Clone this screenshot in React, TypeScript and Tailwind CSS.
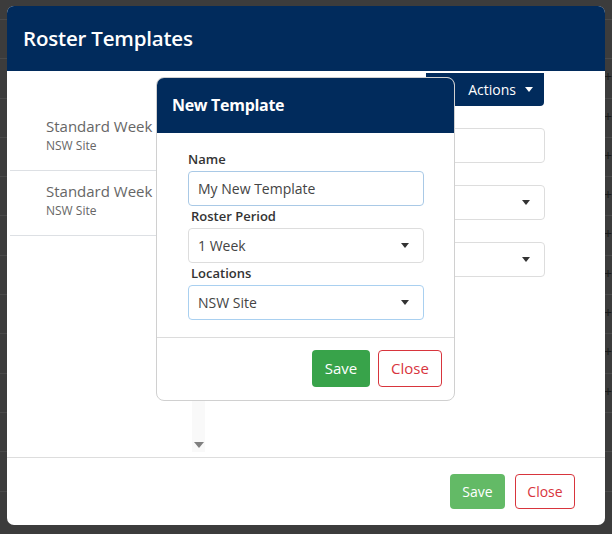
import React from 'react'

const font = { fontFamily: '"Open Sans", "Liberation Sans", sans-serif' }

function Caret({ className = 'border-t-[#333]' }: { className?: string }) {
  return (
    <span
      className={`inline-block w-0 h-0 border-l-[4px] border-r-[4px] border-t-[5px] border-l-transparent border-r-transparent ${className}`}
    />
  )
}

const templates = [
  { name: 'Standard Week', site: 'NSW Site' },
  { name: 'Standard Week 2', site: 'NSW Site' },
]

export default function App() {
  return (
    <div className="relative w-[612px] h-[534px] overflow-hidden bg-[#3c3c3c]" style={font}>
      {/* background table rows behind the dialog */}
      <div className="absolute inset-0 pt-[19px]">
        {Array.from({ length: 13 }).map((_, i) => (
          <div key={i} className="h-[39.3px] border-t border-[#4a4a4a] relative">
            {i > 0 && i < 10 && (
              <span className="absolute right-0 top-[11px] text-[14px] leading-none text-[#1a1a1a]">+</span>
            )}
          </div>
        ))}
      </div>

      {/* dialog */}
      <div className="absolute left-[7px] top-[6px] w-[598px] h-[519px] bg-white rounded-[7px] overflow-hidden flex flex-col">
        <div className="h-[65px] bg-[#012b5c] flex items-center px-[16px] shrink-0">
          <h2 className="text-white text-[20.5px] font-semibold tracking-[-0.2px]">Roster Templates</h2>
        </div>

        <div className="relative flex-1">
          <div className="flex justify-end pr-[61px] pt-[2px]">
            <button className="h-[33px] w-[118px] bg-[#012b5c] rounded-b-[4px] text-white text-[14px] flex items-center justify-end pr-[11px] gap-[9px]">
              Actions <Caret className="border-t-white" />
            </button>
          </div>

          <div className="flex">
            <div className="w-[440px] pl-[3px]">
              {templates.map((t) => (
                <div key={t.name} className="h-[65px] border-b border-[#dde0e4] pl-[36px] pt-[10px]">
                  <div className="text-[15px] text-[#666] leading-[20px]">{t.name}</div>
                  <div className="text-[12px] text-[#666] leading-[20px]">{t.site}</div>
                </div>
              ))}
            </div>
            <div className="flex-1 pr-[60px] pt-[22px] flex flex-col gap-[22px]">
              <div className="h-[35px] border border-[#ddd] rounded-[4px]" />
              <div className="h-[35px] border border-[#ddd] rounded-[4px] flex items-center justify-end pr-[14px]">
                <Caret />
              </div>
              <div className="h-[35px] border border-[#ddd] rounded-[4px] flex items-center justify-end pr-[14px]">
                <Caret />
              </div>
            </div>
          </div>

          {/* dropdown scroll strip under popup */}
          <div className="absolute left-[185px] top-[330px] w-[13px] h-[51px] bg-[#f9f9f9] flex items-end justify-center pb-[4px]">
            <span className="inline-block w-0 h-0 border-l-[5px] border-r-[5px] border-t-[6px] border-l-transparent border-r-transparent border-t-[#808080]" />
          </div>

          {/* New Template popup */}
          <div className="absolute left-[149px] top-[6px] w-[299px] bg-white border border-[#d0d0d0] rounded-[8px] overflow-hidden">
            <div className="h-[56px] bg-[#012b5c] flex items-center px-[16px] -mx-px -mt-px">
              <h3 className="text-white text-[16px] font-bold tracking-[-0.3px]">New Template</h3>
            </div>
            <div className="pt-[16px] pb-[17px] pl-[31px] pr-[30px]">
              <label className="h-[22px] flex items-center text-[13px] font-semibold text-[#333]">Name</label>
              <div className="h-[35px] border border-[#a9c9e6] rounded-[4px] flex items-center px-[9px] text-[14px] text-[#444]">
                My New Template
              </div>
              <label className="h-[22px] flex items-center pl-[3px] text-[13px] font-semibold text-[#333]">Roster Period</label>
              <div className="h-[35px] border border-[#ddd] rounded-[4px] flex items-center justify-between pl-[9px] pr-[14px] text-[14px] text-[#444]">
                1 Week <Caret />
              </div>
              <label className="h-[22px] flex items-center pl-[3px] text-[13px] font-semibold text-[#333]">Locations</label>
              <div className="h-[35px] border border-[#a9d0f0] rounded-[4px] flex items-center justify-between pl-[9px] pr-[14px] text-[14px] text-[#444]">
                NSW Site <Caret />
              </div>
            </div>
            <div className="border-t border-[#dcdcdc] flex justify-end gap-[8px] pt-[12px] pb-[13px] pr-[12px]">
              <button className="h-[37px] w-[58px] bg-[#38a34a] rounded-[4px] text-white text-[15px]">Save</button>
              <button className="h-[37px] w-[64px] border border-[#d8353d] rounded-[4px] text-[#d8353d] text-[15px]">Close</button>
            </div>
          </div>
        </div>

        <div className="h-[68px] border-t border-[#ddd] flex items-center justify-end gap-[10px] pr-[30px] shrink-0">
          <button className="h-[35px] w-[55px] bg-[#63ba66] rounded-[4px] text-white text-[14px]">Save</button>
          <button className="h-[35px] w-[60px] border border-[#d8353d] rounded-[4px] text-[#d8353d] text-[14px]">Close</button>
        </div>
      </div>
    </div>
  )
}
